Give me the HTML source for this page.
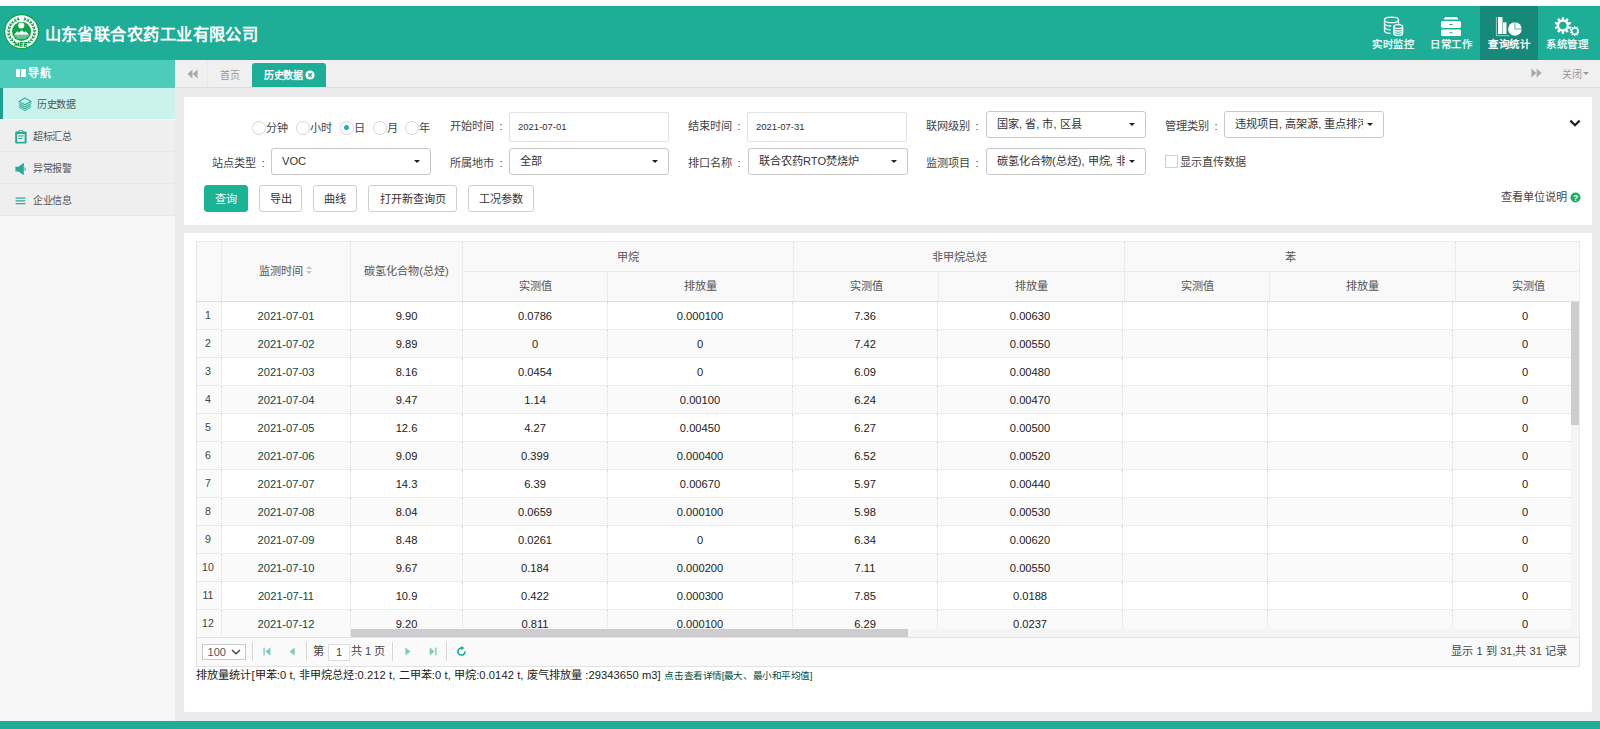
<!DOCTYPE html>
<html lang="zh-CN"><head><meta charset="utf-8"><title>历史数据</title>
<style>
*{box-sizing:border-box;margin:0;padding:0}
html,body{width:1600px;height:729px;overflow:hidden}
body{position:relative;background:#ebebed;font-family:"Liberation Sans",sans-serif;font-size:10px;color:#333}
.abs{position:absolute}
/* header */
.topstrip{position:absolute;left:0;top:0;width:1600px;height:6px;background:#fff;border-bottom:1px solid #f4f1f3}
.header{position:absolute;left:0;top:6px;width:1600px;height:54px;background:#1eae98}
.logo{position:absolute;left:4.44px;top:8.3px;width:35.2px;height:35.2px}
.title{position:absolute;left:44.5px;top:15.5px;height:24px;line-height:24px;font-size:16.2px;letter-spacing:0.45px;font-weight:bold;color:#fff;white-space:nowrap}
.nav{position:absolute;top:0;width:58px;height:54px;color:#fff;text-align:center}
.nav.on{background:#17897a}
.nav svg{position:absolute;left:17px;top:9px;width:24px;height:22px}
.nav span{position:absolute;left:0;width:58px;top:32px;line-height:13px;font-size:10.4px;letter-spacing:0.45px;text-indent:0.45px;white-space:nowrap;-webkit-text-stroke:0.25px #fff}
.nav.on span{font-weight:bold;-webkit-text-stroke:0}
/* sidebar */
.side{position:absolute;left:0;top:60px;width:175px;height:661px;background:#f6f6f6}
.navt{position:absolute;left:0;top:0;width:175px;height:28px;background:#4eccbb;color:#fff;font-weight:bold;font-size:11px;line-height:27.6px;letter-spacing:0.9px}
.navt i{position:absolute;left:15.9px;top:8.9px;width:4.4px;height:8.1px;background:#fff}
.navt i+i{left:21.2px}
.navt b{position:absolute;left:28px;top:0}
.mi{position:absolute;left:0;width:175px;height:32px;background:#efefef;border-bottom:1px solid #e8e8e8;line-height:34.6px;color:#555;font-size:10px;letter-spacing:-0.35px}
.mi span{position:absolute;left:33px;top:0;white-space:nowrap}
.mi svg{position:absolute}
.mi.on{background:#c9f3ec;border-bottom:none;height:31px;border-left:3px solid #17a38d}
/* tabs */
.tabs{position:absolute;left:175px;top:60px;width:1425px;height:28px;background:#f0f0f1;border-bottom:1px solid #dcdcdc}
.tab0{position:absolute;left:45px;top:0;line-height:31px;letter-spacing:-0.3px;color:#999;font-size:10px}
.tab1{position:absolute;left:77px;top:3px;width:74px;height:24px;background:#1eae98;border-radius:3px 3px 0 0;color:#fff;line-height:25.5px;font-size:10px;font-weight:bold;white-space:nowrap;letter-spacing:-0.4px}
/* panels */
.fpanel{position:absolute;left:184px;top:97px;width:1408px;height:128px;background:#fff;border-radius:2px}
.tpanel{position:absolute;left:184px;top:233px;width:1408px;height:479px;background:#fff;border-radius:2px}
.lbl{position:absolute;font-size:11.15px;color:#444;white-space:nowrap;line-height:14px}
.inp{position:absolute;height:30px;border:1px solid #e3e3e3;border-radius:2px;background:#fff;font-size:9.5px;line-height:28px;padding-left:8px;color:#333}
.sel{position:absolute;height:27px;border:1px solid #c8c8c8;border-radius:3px;background:#fff;font-size:11.15px;line-height:24px;padding-left:10px;color:#333;white-space:nowrap;overflow:hidden}
.sel:after{content:"";position:absolute;right:10px;top:10.5px;border:3.4px solid transparent;border-top:3.6px solid #222;border-bottom:none}
.radio{position:absolute;width:13.5px;height:13.5px;border:1px solid #d6d6d6;border-radius:50%;background:#fff}
.radio.on:after{content:"";position:absolute;left:3.2px;top:3.2px;width:5.2px;height:5.2px;border-radius:50%;background:#1db3ae}
.btn{position:absolute;top:89px;height:27px;border:1px solid #cecece;border-radius:3px;background:#fff;color:#333;font-size:11.15px;line-height:26px;text-align:center;white-space:nowrap}
.btn.pri{background:#1ab394;border-color:#1ab394;color:#fff}
.chk{position:absolute;width:13px;height:13px;border:1px solid #d0d0d0;background:#fff}
/* grid */
.grid{position:absolute;left:12px;top:8px;width:1384px;height:397px;overflow:hidden}
.gframe{position:absolute;left:12px;top:8px;width:1384px;height:397px;border-top:1px solid #ebebeb;border-left:1px solid #e8e8e8;border-right:1px solid #ececec;pointer-events:none}
.ghead{position:absolute;left:0;top:0;width:1500px;height:61px;background:#f9f9f9;border-bottom:1px solid #dedede}
.hc:first-child{border-left:none}
.hc{position:absolute;text-align:center;font-size:11.15px;color:#555;border-left:1px dotted #dcdcdc;white-space:nowrap}
.hc.ra{border-bottom:1px dotted #dcdcdc}
.sort{display:inline-block;position:relative;width:8px;height:10px;margin-left:3px;vertical-align:-1px}
.sort i{position:absolute;left:0;border:3px solid transparent}
.sort .su{top:-3px;border-bottom-color:#c4c4c4}
.sort .sd{top:5px;border-top-color:#c4c4c4}
.gbody{position:absolute;left:0;top:61px;width:1500px;height:340px}
.gr{position:absolute;left:0;width:1500px;height:28px;background:#fff}
.gr.alt{background:#fafafa}
.bc{position:absolute;top:0;height:28px;line-height:28px;text-align:center;font-size:11.15px;color:#222;border-left:1px dotted #dcdcdc;border-bottom:1px dotted #dcdcdc;white-space:nowrap}
.bc.rn{background:#fafafa;border-left:none;color:#444;font-size:10.6px;line-height:26px;text-indent:-2px}
.bc.dt{color:#0b4a44}
.vsb{position:absolute;left:1375px;top:61px;width:8px;height:336px;background:#f5f5f6}
.vth{position:absolute;left:0;top:0;width:8px;height:123px;background:#cdcdcf}
.hsb{position:absolute;left:155px;top:388px;width:1220px;height:8px;background:#f5f5f6}
.hth{position:absolute;left:0;top:0;width:557px;height:8px;background:#cdcdcf}
/* pager */
.pager{position:absolute;left:12px;top:404px;width:1384px;height:30px;background:#fafafa;border:1px solid #e2e2e2;font-size:11.15px;color:#444}
.summary{position:absolute;left:12px;top:435px;font-size:11.15px;line-height:14px;color:#222;white-space:nowrap;letter-spacing:0.085px}
.summary a{color:#064a3b;font-size:9.6px;margin-left:0.5px;letter-spacing:-0.45px}
.footer{position:absolute;left:0;top:721px;width:1600px;height:8px;background:#1eae98}
.psep{top:4px;width:1px;height:19px;background:#d4d4d4;border-right:1px solid #fff;width:2px}
.lbl i{font-style:normal;margin-left:5.5px}

</style></head>
<body>
<div class="topstrip"></div>
<div class="header">
  <svg class="logo" viewBox="0 0 36 36">
    <circle cx="18" cy="18" r="18" fill="#12a14b"/>
    <circle cx="18" cy="18" r="16.7" fill="#fff"/>
    <g fill="#12a14b"><ellipse cx="25.89" cy="29.29" rx="1.6" ry="0.68" transform="rotate(6.0 25.89 29.29)"/><ellipse cx="25.30" cy="28.35" rx="1.6" ry="0.68" transform="rotate(-70.0 25.30 28.35)"/><ellipse cx="28.45" cy="26.97" rx="1.6" ry="0.68" transform="rotate(-8.4 28.45 26.97)"/><ellipse cx="27.65" cy="26.21" rx="1.6" ry="0.68" transform="rotate(-84.4 27.65 26.21)"/><ellipse cx="30.35" cy="24.09" rx="1.6" ry="0.68" transform="rotate(-22.8 30.35 24.09)"/><ellipse cx="29.38" cy="23.55" rx="1.6" ry="0.68" transform="rotate(-98.8 29.38 23.55)"/><ellipse cx="31.48" cy="20.83" rx="1.6" ry="0.68" transform="rotate(-37.2 31.48 20.83)"/><ellipse cx="30.41" cy="20.54" rx="1.6" ry="0.68" transform="rotate(-113.2 30.41 20.54)"/><ellipse cx="31.76" cy="17.39" rx="1.6" ry="0.68" transform="rotate(-51.6 31.76 17.39)"/><ellipse cx="30.65" cy="17.38" rx="1.6" ry="0.68" transform="rotate(-127.6 30.65 17.38)"/><ellipse cx="31.17" cy="13.98" rx="1.6" ry="0.68" transform="rotate(-66.0 31.17 13.98)"/><ellipse cx="30.10" cy="14.25" rx="1.6" ry="0.68" transform="rotate(-142.0 30.10 14.25)"/><ellipse cx="29.76" cy="10.83" rx="1.6" ry="0.68" transform="rotate(-80.4 29.76 10.83)"/><ellipse cx="28.79" cy="11.36" rx="1.6" ry="0.68" transform="rotate(-156.4 28.79 11.36)"/><ellipse cx="27.61" cy="8.13" rx="1.6" ry="0.68" transform="rotate(-94.8 27.61 8.13)"/><ellipse cx="26.80" cy="8.89" rx="1.6" ry="0.68" transform="rotate(-170.8 26.80 8.89)"/><ellipse cx="24.85" cy="6.05" rx="1.6" ry="0.68" transform="rotate(-109.2 24.85 6.05)"/><ellipse cx="24.25" cy="6.99" rx="1.6" ry="0.68" transform="rotate(-185.2 24.25 6.99)"/><ellipse cx="21.67" cy="4.73" rx="1.6" ry="0.68" transform="rotate(-123.6 21.67 4.73)"/><ellipse cx="21.32" cy="5.78" rx="1.6" ry="0.68" transform="rotate(-199.6 21.32 5.78)"/><ellipse cx="10.11" cy="29.29" rx="1.6" ry="0.68" transform="rotate(174.0 10.11 29.29)"/><ellipse cx="10.70" cy="28.35" rx="1.6" ry="0.68" transform="rotate(250.0 10.70 28.35)"/><ellipse cx="7.55" cy="26.97" rx="1.6" ry="0.68" transform="rotate(188.4 7.55 26.97)"/><ellipse cx="8.35" cy="26.21" rx="1.6" ry="0.68" transform="rotate(264.4 8.35 26.21)"/><ellipse cx="5.65" cy="24.09" rx="1.6" ry="0.68" transform="rotate(202.8 5.65 24.09)"/><ellipse cx="6.62" cy="23.55" rx="1.6" ry="0.68" transform="rotate(278.8 6.62 23.55)"/><ellipse cx="4.52" cy="20.83" rx="1.6" ry="0.68" transform="rotate(217.2 4.52 20.83)"/><ellipse cx="5.59" cy="20.54" rx="1.6" ry="0.68" transform="rotate(293.2 5.59 20.54)"/><ellipse cx="4.24" cy="17.39" rx="1.6" ry="0.68" transform="rotate(231.6 4.24 17.39)"/><ellipse cx="5.35" cy="17.38" rx="1.6" ry="0.68" transform="rotate(307.6 5.35 17.38)"/><ellipse cx="4.83" cy="13.98" rx="1.6" ry="0.68" transform="rotate(246.0 4.83 13.98)"/><ellipse cx="5.90" cy="14.25" rx="1.6" ry="0.68" transform="rotate(322.0 5.90 14.25)"/><ellipse cx="6.24" cy="10.83" rx="1.6" ry="0.68" transform="rotate(260.4 6.24 10.83)"/><ellipse cx="7.21" cy="11.36" rx="1.6" ry="0.68" transform="rotate(336.4 7.21 11.36)"/><ellipse cx="8.39" cy="8.13" rx="1.6" ry="0.68" transform="rotate(274.8 8.39 8.13)"/><ellipse cx="9.20" cy="8.89" rx="1.6" ry="0.68" transform="rotate(350.8 9.20 8.89)"/><ellipse cx="11.15" cy="6.05" rx="1.6" ry="0.68" transform="rotate(289.2 11.15 6.05)"/><ellipse cx="11.75" cy="6.99" rx="1.6" ry="0.68" transform="rotate(365.2 11.75 6.99)"/><ellipse cx="14.33" cy="4.73" rx="1.6" ry="0.68" transform="rotate(303.6 14.33 4.73)"/><ellipse cx="14.68" cy="5.78" rx="1.6" ry="0.68" transform="rotate(379.6 14.68 5.78)"/></g>
    <circle cx="18" cy="17.85" r="9.8" fill="#12a14b"/>
    <circle cx="17.7" cy="11.7" r="3.1" fill="#fff"/>
    <path d="M10.4 21.3 L13.5 17.6 L14.9 19.1 L18.25 16.5 L20.8 18.8 L22.2 17.7 L25.6 21.3 Z" fill="#fff"/>
    <path d="M10.8 22.1 H25.2 L24.7 23 H11.3 Z" fill="#bfe6cd"/>
    <path d="M12.4 23.9 H23.6 L22.2 25.2 H13.8 Z" fill="#7fcf9f"/>
    <g transform="translate(11.4 28.9) scale(1.32 1.22) skewX(-10)" fill="none" stroke="#12a14b" stroke-width="0.95" stroke-linejoin="miter">
      <path d="M0.4 3.4 V0.2 L1.7 2.6 L3 0.2 V3.4"/>
      <path d="M6.5 0.3 H4.3 V3.2 H6.5 M4.3 1.75 H6.2"/>
      <path d="M9.9 0.3 H7.7 V3.2 H9.9 M7.7 1.75 H9.6"/>
    </g>
  </svg>
  <div class="title">山东省联合农药工业有限公司</div>

  <div class="nav" style="left:1364px">
    <svg viewBox="0 0 24 22" fill="none" stroke="#fff" stroke-width="1.3">
      <ellipse cx="10.5" cy="4.9" rx="7" ry="2.7"/>
      <path d="M3.5 4.9 V15.6 C3.5 17.2 6.2 18.4 9.6 18.5"/>
      <path d="M17.5 4.9 V8.8"/>
      <path d="M3.5 8.2 C3.5 9.7 6.3 10.9 10.2 11"/>
      <path d="M3.5 12 C3.5 13.5 6 14.6 9.6 14.8"/>
      <ellipse cx="17.2" cy="11.6" rx="4.4" ry="2"/>
      <path d="M12.8 11.6 V18.4 C12.8 19.5 14.8 20.4 17.2 20.4 C19.6 20.4 21.6 19.5 21.6 18.4 V11.6"/>
      <path d="M12.8 14 C12.8 15.1 14.8 16 17.2 16 C19.6 16 21.6 15.1 21.6 14"/>
      <path d="M12.8 16.3 C12.8 17.4 14.8 18.3 17.2 18.3 C19.6 18.3 21.6 17.4 21.6 16.3"/>
    </svg>
    <span>实时监控</span>
  </div>
  <div class="nav" style="left:1422px">
    <svg viewBox="0 0 24 22" fill="#fff" stroke="none">
      <path d="M6.2 2 H17.8 L19.6 4.6 H4.4 Z"/>
      <path d="M3.6 6 H20.4 Q22 6 22 7.6 V11.4 Q22 12.9 20.4 12.9 H3.6 Q2 12.9 2 11.4 V7.6 Q2 6 3.6 6 Z M10.4 8.9 H13.6 Q14 9.4 13.6 9.9 H10.4 Q10 9.4 10.4 8.9 Z" fill-rule="evenodd"/>
      <path d="M3.6 14.6 H20.4 Q22 14.6 22 16.2 V19.4 Q22 20.9 20.4 20.9 H3.6 Q2 20.9 2 19.4 V16.2 Q2 14.6 3.6 14.6 Z M10.4 17.2 H13.6 Q14 17.7 13.6 18.2 H10.4 Q10 17.7 10.4 17.2 Z" fill-rule="evenodd"/>
    </svg>
    <span>日常工作</span>
  </div>
  <div class="nav on" style="left:1480px">
    <svg viewBox="0 0 24 22" style="overflow:visible">
      <path d="M-0.6 2 V20.7 H12.4" fill="none" stroke="#fff" stroke-width="0.6"/>
      <rect x="1" y="2" width="4.5" height="17" fill="#fff"/>
      <rect x="6" y="7.4" width="3.5" height="11.6" fill="#fff"/>
      <circle cx="17.9" cy="14" r="6.8" fill="#fff"/>
      <path d="M17.9 14 V7 M17.9 14 H25" fill="none" stroke="#17897a" stroke-width="0.7"/>
    </svg>
    <span>查询统计</span>
  </div>
  <div class="nav" style="left:1538px">
    <svg viewBox="0 0 24 22"><path fill="#fff" fill-rule="evenodd" d="M6.58 4.70 L6.80 2.17 L9.00 2.17 L9.22 4.70 L10.21 5.02 L11.88 3.11 L13.65 4.40 L12.35 6.58 L12.96 7.41 L15.43 6.85 L16.11 8.94 L13.78 9.93 L13.78 10.97 L16.11 11.96 L15.43 14.05 L12.96 13.49 L12.35 14.32 L13.65 16.50 L11.88 17.79 L10.21 15.88 L9.22 16.20 L9.00 18.73 L6.80 18.73 L6.58 16.20 L5.59 15.88 L3.92 17.79 L2.15 16.50 L3.45 14.32 L2.84 13.49 L0.37 14.05 L-0.31 11.96 L2.02 10.97 L2.02 9.93 L-0.31 8.94 L0.37 6.85 L2.84 7.41 L3.45 6.58 L2.15 4.40 L3.92 3.11 L5.59 5.02 Z M4.10 10.45 A3.8 3.8 0 1 0 11.70 10.45 A3.8 3.8 0 1 0 4.10 10.45 Z"/><path fill="#fff" fill-rule="evenodd" d="M18.92 12.65 L19.09 11.14 L20.41 11.14 L20.58 12.65 L21.11 12.82 L22.13 11.70 L23.20 12.48 L22.45 13.79 L22.78 14.25 L24.26 13.94 L24.67 15.19 L23.29 15.82 L23.29 16.38 L24.67 17.01 L24.26 18.26 L22.78 17.95 L22.45 18.41 L23.20 19.72 L22.13 20.50 L21.11 19.38 L20.58 19.55 L20.41 21.06 L19.09 21.06 L18.92 19.55 L18.39 19.38 L17.37 20.50 L16.30 19.72 L17.05 18.41 L16.72 17.95 L15.24 18.26 L14.83 17.01 L16.21 16.38 L16.21 15.82 L14.83 15.19 L15.24 13.94 L16.72 14.25 L17.05 13.79 L16.30 12.48 L17.37 11.70 L18.39 12.82 Z M17.35 16.10 A2.4 2.4 0 1 0 22.15 16.10 A2.4 2.4 0 1 0 17.35 16.10 Z"/></svg>
    <span>系统管理</span>
  </div>
</div>

<div class="side">
  <div class="navt"><i></i><i></i><b>导航</b></div>
  <div class="mi on" style="top:28px">
    <svg style="left:15px;top:9.4px;width:14px;height:14px" viewBox="0 0 14 14" fill="none" stroke="#2eb09c" stroke-width="1.1" stroke-linejoin="round">
      <path d="M7 1 L13 4.4 L7 7.8 L1 4.4 Z"/>
      <path d="M1 6.6 L7 10 L13 6.6"/>
      <path d="M1 8.6 L7 12 L13 8.6"/>
      <path d="M1 10.4 L7 13.6 L13 10.4" stroke-width="0.8"/>
    </svg>
    <span style="left:34px">历史数据</span>
  </div>
  <div class="mi" style="top:60px">
    <svg style="left:15px;top:9.7px;width:12px;height:14px" viewBox="0 0 12 14">
      <rect x="0.2" y="1.6" width="11.4" height="12" rx="1" fill="#26ab97"/>
      <rect x="2.2" y="4" width="7.4" height="7.8" fill="#efefef"/>
      <rect x="3.6" y="0.2" width="4.6" height="2.6" rx="0.6" fill="#26ab97"/>
      <rect x="4.6" y="1" width="2.6" height="1" fill="#efefef"/>
      <rect x="3.2" y="5.4" width="5.4" height="1.1" fill="#26ab97"/>
      <rect x="3.2" y="8" width="4" height="1.1" fill="#26ab97"/>
    </svg>
    <span>超标汇总</span>
  </div>
  <div class="mi" style="top:92px">
    <svg style="left:15px;top:9.7px;width:12px;height:14px" viewBox="0 0 12 14">
      <path d="M0.4 4.8 H3.4 L8.8 0.8 V13.2 L3.4 9.4 H0.4 Z" fill="#26ab97"/>
      <path d="M9.6 5.6 Q11.4 7 9.6 8.6" fill="none" stroke="#26ab97" stroke-width="1"/>
    </svg>
    <span>异常报警</span>
  </div>
  <div class="mi" style="top:124px">
    <svg style="left:15.4px;top:11px;width:11px;height:12px" viewBox="0 0 11 12">
      <rect x="0.6" y="2.4" width="9.8" height="1.3" fill="#2eb09c"/>
      <rect x="0.6" y="5.2" width="9.8" height="1.3" fill="#2eb09c"/>
      <rect x="0.6" y="8" width="9.8" height="1.3" fill="#2eb09c"/>
    </svg>
    <span>企业信息</span>
  </div>
</div>

<div class="tabs">
  <svg class="abs" style="left:11.6px;top:8.6px;width:11px;height:10px" viewBox="0 0 11 10" fill="#aaa"><path d="M5.4 0.6 V9.4 L0.4 5 Z M10.6 0.6 V9.4 L5.6 5 Z"/></svg>
  <div class="abs" style="left:32px;top:0;width:1px;height:27px;background:#e8e8e8"></div>
  <div class="tab0">首页</div>
  <div class="tab1"><span style="position:absolute;left:12px;top:0">历史数据</span>
    <svg class="abs" style="left:53px;top:6.6px;width:10px;height:10px" viewBox="0 0 10 10"><circle cx="5" cy="5" r="4.6" fill="#fff"/><path d="M3.3 3.3 L6.7 6.7 M6.7 3.3 L3.3 6.7" stroke="#1eae98" stroke-width="1.5"/></svg>
  </div>
  <svg class="abs" style="left:1355.8px;top:8.2px;width:11px;height:10px" viewBox="0 0 11 10" fill="#aaa"><path d="M0.4 0.6 V9.4 L5.4 5 Z M5.6 0.6 V9.4 L10.6 5 Z"/></svg>
  <div class="abs" style="left:1387px;top:0;line-height:30px;color:#999;font-size:10px;white-space:nowrap;letter-spacing:-0.3px">关闭</div>
  <div class="abs" style="left:1408px;top:12.2px;border:3.4px solid transparent;border-top:3.4px solid #999;border-bottom:none"></div>
</div>

<div class="fpanel"></div>
<!-- row 1 -->
<div class="radio" style="left:252px;top:121px"></div><div class="lbl" style="left:266px;top:120.5px">分钟</div>
<div class="radio" style="left:296px;top:121px"></div><div class="lbl" style="left:310px;top:120.5px">小时</div>
<div class="radio on" style="left:340px;top:121px"></div><div class="lbl" style="left:354px;top:120.5px">日</div>
<div class="radio" style="left:373px;top:121px"></div><div class="lbl" style="left:387px;top:120.5px">月</div>
<div class="radio" style="left:405px;top:121px"></div><div class="lbl" style="left:419px;top:120.5px">年</div>
<div class="lbl" style="left:450px;top:119px">开始时间<i>:</i></div>
<div class="inp" style="left:509px;top:112px;width:160px">2021-07-01</div>
<div class="lbl" style="left:688px;top:119px">结束时间<i>:</i></div>
<div class="inp" style="left:747px;top:112px;width:160px">2021-07-31</div>
<div class="lbl" style="left:926px;top:119px">联网级别<i>:</i></div>
<div class="sel" style="left:986px;top:111px;width:160px">国家, 省, 市, 区县</div>
<div class="lbl" style="left:1165px;top:119px">管理类别<i>:</i></div>
<div class="sel" style="left:1224px;top:111px;width:160px"><span class="clip" style="display:block;width:128px;overflow:hidden">违规项目, 高架源, 重点排污</span></div>
<svg class="abs" style="left:1569px;top:119px;width:12px;height:9px" viewBox="0 0 12 9"><path d="M1.4 1.6 L6 6.2 L10.6 1.6" fill="none" stroke="#222" stroke-width="2.3"/></svg>
<!-- row 2 -->
<div class="lbl" style="left:212px;top:156px">站点类型<i>:</i></div>
<div class="sel" style="left:271px;top:148px;width:160px;height:27px">VOC</div>
<div class="lbl" style="left:450px;top:156px">所属地市<i>:</i></div>
<div class="sel" style="left:509px;top:148px;width:160px;height:27px">全部</div>
<div class="lbl" style="left:688px;top:156px">排口名称<i>:</i></div>
<div class="sel" style="left:748px;top:148px;width:160px;height:27px">联合农药RTO焚烧炉</div>
<div class="lbl" style="left:926px;top:156px">监测项目<i>:</i></div>
<div class="sel" style="left:986px;top:148px;width:160px;height:27px"><span class="clip" style="display:block;width:128px;overflow:hidden">碳氢化合物(总烃), 甲烷, 非甲烷</span></div>
<div class="chk" style="left:1165px;top:155px"></div>
<div class="lbl" style="left:1180px;top:155px">显示直传数据</div>
<!-- buttons -->
<div class="btn pri" style="left:204px;top:185px;width:44px">查询</div>
<div class="btn" style="left:259px;top:185px;width:43px">导出</div>
<div class="btn" style="left:313px;top:185px;width:44px">曲线</div>
<div class="btn" style="left:368px;top:185px;width:89px">打开新查询页</div>
<div class="btn" style="left:468px;top:185px;width:66px">工况参数</div>
<div class="lbl" style="left:1501px;top:190px">查看单位说明</div>
<svg class="abs" style="left:1570px;top:192px;width:11px;height:11px" viewBox="0 0 11 11"><circle cx="5.5" cy="5.5" r="5" fill="#1aaf5d"/><text x="5.5" y="8.6" font-size="8.5" font-weight="bold" text-anchor="middle" fill="#fff" font-family="Liberation Sans, sans-serif">?</text></svg>
<div class="tpanel">
<div class="grid">
<div class="ghead">
<div class="hc" style="left:1px;width:24px;top:1px;height:59px;line-height:59px"></div>
<div class="hc" style="left:25px;width:129px;top:1px;height:59px;line-height:59px">监测时间<span class="sort"><i class="su"></i><i class="sd"></i></span></div>
<div class="hc" style="left:154px;width:112px;top:1px;height:59px;line-height:59px">碳氢化合物(总烃)</div>
<div class="hc ra" style="left:266px;width:331px;top:1px;height:30px;line-height:30px">甲烷</div>
<div class="hc ra" style="left:597px;width:331px;top:1px;height:30px;line-height:30px">非甲烷总烃</div>
<div class="hc ra" style="left:928px;width:331px;top:1px;height:30px;line-height:30px">苯</div>
<div class="hc ra" style="left:1259px;width:145px;top:1px;height:30px;line-height:30px"></div>
<div class="hc" style="left:266px;width:145px;top:31px;height:29px;line-height:29px">实测值</div>
<div class="hc" style="left:411px;width:186px;top:31px;height:29px;line-height:29px">排放量</div>
<div class="hc" style="left:597px;width:145px;top:31px;height:29px;line-height:29px">实测值</div>
<div class="hc" style="left:742px;width:186px;top:31px;height:29px;line-height:29px">排放量</div>
<div class="hc" style="left:928px;width:145px;top:31px;height:29px;line-height:29px">实测值</div>
<div class="hc" style="left:1073px;width:186px;top:31px;height:29px;line-height:29px">排放量</div>
<div class="hc" style="left:1259px;width:145px;top:31px;height:29px;line-height:29px">实测值</div>
</div>
<div class="gbody">
<div class="gr" style="top:0px">
<div class="bc rn" style="left:1px;width:24px">1</div>
<div class="bc dt" style="left:25px;width:129px">2021-07-01</div>
<div class="bc" style="left:154px;width:112px">9.90</div>
<div class="bc" style="left:266px;width:145px">0.0786</div>
<div class="bc" style="left:411px;width:185px">0.000100</div>
<div class="bc" style="left:596px;width:145px">7.36</div>
<div class="bc" style="left:741px;width:185px">0.00630</div>
<div class="bc" style="left:926px;width:145px"></div>
<div class="bc" style="left:1071px;width:185px"></div>
<div class="bc" style="left:1256px;width:145px">0</div>
</div>
<div class="gr alt" style="top:28px">
<div class="bc rn" style="left:1px;width:24px">2</div>
<div class="bc dt" style="left:25px;width:129px">2021-07-02</div>
<div class="bc" style="left:154px;width:112px">9.89</div>
<div class="bc" style="left:266px;width:145px">0</div>
<div class="bc" style="left:411px;width:185px">0</div>
<div class="bc" style="left:596px;width:145px">7.42</div>
<div class="bc" style="left:741px;width:185px">0.00550</div>
<div class="bc" style="left:926px;width:145px"></div>
<div class="bc" style="left:1071px;width:185px"></div>
<div class="bc" style="left:1256px;width:145px">0</div>
</div>
<div class="gr" style="top:56px">
<div class="bc rn" style="left:1px;width:24px">3</div>
<div class="bc dt" style="left:25px;width:129px">2021-07-03</div>
<div class="bc" style="left:154px;width:112px">8.16</div>
<div class="bc" style="left:266px;width:145px">0.0454</div>
<div class="bc" style="left:411px;width:185px">0</div>
<div class="bc" style="left:596px;width:145px">6.09</div>
<div class="bc" style="left:741px;width:185px">0.00480</div>
<div class="bc" style="left:926px;width:145px"></div>
<div class="bc" style="left:1071px;width:185px"></div>
<div class="bc" style="left:1256px;width:145px">0</div>
</div>
<div class="gr alt" style="top:84px">
<div class="bc rn" style="left:1px;width:24px">4</div>
<div class="bc dt" style="left:25px;width:129px">2021-07-04</div>
<div class="bc" style="left:154px;width:112px">9.47</div>
<div class="bc" style="left:266px;width:145px">1.14</div>
<div class="bc" style="left:411px;width:185px">0.00100</div>
<div class="bc" style="left:596px;width:145px">6.24</div>
<div class="bc" style="left:741px;width:185px">0.00470</div>
<div class="bc" style="left:926px;width:145px"></div>
<div class="bc" style="left:1071px;width:185px"></div>
<div class="bc" style="left:1256px;width:145px">0</div>
</div>
<div class="gr" style="top:112px">
<div class="bc rn" style="left:1px;width:24px">5</div>
<div class="bc dt" style="left:25px;width:129px">2021-07-05</div>
<div class="bc" style="left:154px;width:112px">12.6</div>
<div class="bc" style="left:266px;width:145px">4.27</div>
<div class="bc" style="left:411px;width:185px">0.00450</div>
<div class="bc" style="left:596px;width:145px">6.27</div>
<div class="bc" style="left:741px;width:185px">0.00500</div>
<div class="bc" style="left:926px;width:145px"></div>
<div class="bc" style="left:1071px;width:185px"></div>
<div class="bc" style="left:1256px;width:145px">0</div>
</div>
<div class="gr alt" style="top:140px">
<div class="bc rn" style="left:1px;width:24px">6</div>
<div class="bc dt" style="left:25px;width:129px">2021-07-06</div>
<div class="bc" style="left:154px;width:112px">9.09</div>
<div class="bc" style="left:266px;width:145px">0.399</div>
<div class="bc" style="left:411px;width:185px">0.000400</div>
<div class="bc" style="left:596px;width:145px">6.52</div>
<div class="bc" style="left:741px;width:185px">0.00520</div>
<div class="bc" style="left:926px;width:145px"></div>
<div class="bc" style="left:1071px;width:185px"></div>
<div class="bc" style="left:1256px;width:145px">0</div>
</div>
<div class="gr" style="top:168px">
<div class="bc rn" style="left:1px;width:24px">7</div>
<div class="bc dt" style="left:25px;width:129px">2021-07-07</div>
<div class="bc" style="left:154px;width:112px">14.3</div>
<div class="bc" style="left:266px;width:145px">6.39</div>
<div class="bc" style="left:411px;width:185px">0.00670</div>
<div class="bc" style="left:596px;width:145px">5.97</div>
<div class="bc" style="left:741px;width:185px">0.00440</div>
<div class="bc" style="left:926px;width:145px"></div>
<div class="bc" style="left:1071px;width:185px"></div>
<div class="bc" style="left:1256px;width:145px">0</div>
</div>
<div class="gr alt" style="top:196px">
<div class="bc rn" style="left:1px;width:24px">8</div>
<div class="bc dt" style="left:25px;width:129px">2021-07-08</div>
<div class="bc" style="left:154px;width:112px">8.04</div>
<div class="bc" style="left:266px;width:145px">0.0659</div>
<div class="bc" style="left:411px;width:185px">0.000100</div>
<div class="bc" style="left:596px;width:145px">5.98</div>
<div class="bc" style="left:741px;width:185px">0.00530</div>
<div class="bc" style="left:926px;width:145px"></div>
<div class="bc" style="left:1071px;width:185px"></div>
<div class="bc" style="left:1256px;width:145px">0</div>
</div>
<div class="gr" style="top:224px">
<div class="bc rn" style="left:1px;width:24px">9</div>
<div class="bc dt" style="left:25px;width:129px">2021-07-09</div>
<div class="bc" style="left:154px;width:112px">8.48</div>
<div class="bc" style="left:266px;width:145px">0.0261</div>
<div class="bc" style="left:411px;width:185px">0</div>
<div class="bc" style="left:596px;width:145px">6.34</div>
<div class="bc" style="left:741px;width:185px">0.00620</div>
<div class="bc" style="left:926px;width:145px"></div>
<div class="bc" style="left:1071px;width:185px"></div>
<div class="bc" style="left:1256px;width:145px">0</div>
</div>
<div class="gr alt" style="top:252px">
<div class="bc rn" style="left:1px;width:24px">10</div>
<div class="bc dt" style="left:25px;width:129px">2021-07-10</div>
<div class="bc" style="left:154px;width:112px">9.67</div>
<div class="bc" style="left:266px;width:145px">0.184</div>
<div class="bc" style="left:411px;width:185px">0.000200</div>
<div class="bc" style="left:596px;width:145px">7.11</div>
<div class="bc" style="left:741px;width:185px">0.00550</div>
<div class="bc" style="left:926px;width:145px"></div>
<div class="bc" style="left:1071px;width:185px"></div>
<div class="bc" style="left:1256px;width:145px">0</div>
</div>
<div class="gr" style="top:280px">
<div class="bc rn" style="left:1px;width:24px">11</div>
<div class="bc dt" style="left:25px;width:129px">2021-07-11</div>
<div class="bc" style="left:154px;width:112px">10.9</div>
<div class="bc" style="left:266px;width:145px">0.422</div>
<div class="bc" style="left:411px;width:185px">0.000300</div>
<div class="bc" style="left:596px;width:145px">7.85</div>
<div class="bc" style="left:741px;width:185px">0.0188</div>
<div class="bc" style="left:926px;width:145px"></div>
<div class="bc" style="left:1071px;width:185px"></div>
<div class="bc" style="left:1256px;width:145px">0</div>
</div>
<div class="gr alt" style="top:308px">
<div class="bc rn" style="left:1px;width:24px">12</div>
<div class="bc dt" style="left:25px;width:129px">2021-07-12</div>
<div class="bc" style="left:154px;width:112px">9.20</div>
<div class="bc" style="left:266px;width:145px">0.811</div>
<div class="bc" style="left:411px;width:185px">0.000100</div>
<div class="bc" style="left:596px;width:145px">6.29</div>
<div class="bc" style="left:741px;width:185px">0.0237</div>
<div class="bc" style="left:926px;width:145px"></div>
<div class="bc" style="left:1071px;width:185px"></div>
<div class="bc" style="left:1256px;width:145px">0</div>
</div>
</div>
<div class="vsb"><div class="vth"></div></div>
<div class="hsb"><div class="hth"></div></div>
</div>
<div class="gframe"></div>
<div class="pager">
  <div class="abs" style="left:4.6px;top:6px;width:44px;height:16px;border:1px solid #c9c9c9;background:#fff;line-height:15px;padding-left:5px;font-size:11px;color:#555">100
    <svg class="abs" style="left:28px;top:4px;width:10px;height:6px" viewBox="0 0 10 6"><path d="M1 1 L5 4.8 L9 1" fill="none" stroke="#444" stroke-width="1.4"/></svg>
  </div>
  <div class="abs psep" style="left:55px"></div>
  <svg class="abs" style="left:66px;top:9px;width:8px;height:9px" viewBox="0 0 8 9" fill="#7bccc0"><rect x="0.4" y="0.6" width="1.4" height="7.8"/><path d="M7.4 0.6 V8.4 L2.4 4.5 Z"/></svg>
  <svg class="abs" style="left:92px;top:9px;width:6px;height:9px" viewBox="0 0 6 9" fill="#7bccc0"><path d="M5.6 0.6 V8.4 L0.6 4.5 Z"/></svg>
  <div class="abs psep" style="left:109px"></div>
  <div class="abs" style="left:116px;top:0;line-height:27px">第</div>
  <div class="abs" style="left:131px;top:6px;width:22px;height:17px;border:1px solid #ddd;background:#fff;text-align:center;line-height:15px">1</div>
  <div class="abs" style="left:154px;top:0;line-height:27px;white-space:nowrap">共 1 页</div>
  <div class="abs psep" style="left:195px"></div>
  <svg class="abs" style="left:208px;top:9px;width:6px;height:9px" viewBox="0 0 6 9" fill="#7bccc0"><path d="M0.4 0.6 V8.4 L5.4 4.5 Z"/></svg>
  <svg class="abs" style="left:232px;top:9px;width:8px;height:9px" viewBox="0 0 8 9" fill="#7bccc0"><rect x="6.2" y="0.6" width="1.4" height="7.8"/><path d="M0.6 0.6 V8.4 L5.6 4.5 Z"/></svg>
  <div class="abs psep" style="left:249px"></div>
  <svg class="abs" style="left:259px;top:8px;width:11px;height:11px" viewBox="0 0 11 11"><path d="M9 5.6 A3.5 3.5 0 1 1 5.5 2" fill="none" stroke="#1aa99a" stroke-width="1.7"/><path d="M5.2 0 L8.4 2.1 L5.2 4.2 Z" fill="#1aa99a"/></svg>
  <div class="abs" style="right:12px;top:0;line-height:26px;white-space:nowrap;font-size:11.15px">显示 1 到 31,共 31 记录</div>
</div>
<div class="summary">排放量统计[甲苯:0 t, 非甲烷总烃:0.212 t, 二甲苯:0 t, 甲烷:0.0142 t, 废气排放量 :29343650 m3] <a>点击查看详情[最大、最小和平均值]</a></div>

</div>
<div class="footer"></div>
</body></html>
